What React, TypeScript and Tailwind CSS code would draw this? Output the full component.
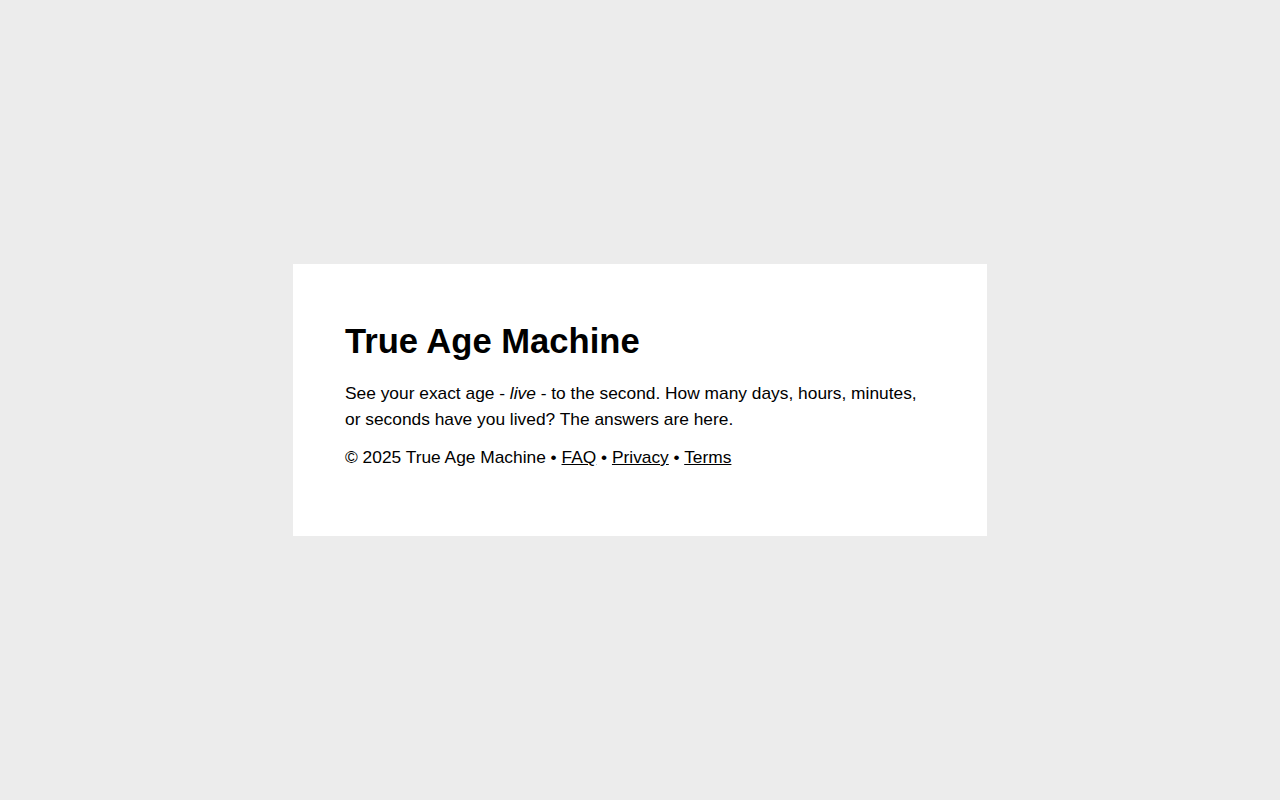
export default function App() {
  return (
    <div className="min-h-screen bg-[#ececec] flex items-center justify-center" style={{ fontFamily: '"Liberation Sans", Arial, sans-serif' }}>
      <div className="w-[694px] bg-white px-[52px] pt-[56px] pb-[66px] text-black">
        <h1 className="text-[34.6px] font-bold leading-[42px] mb-[18px]">True Age Machine</h1>
        <p className="text-[17.35px] leading-[26px] mb-[12px]">
          See your exact age - <em>live</em> - to the second. How many days, hours, minutes, or seconds have you lived? The answers are here.
        </p>
        <p className="text-[17.35px] leading-[26px]">
          © 2025 True Age Machine • <a href="#" className="underline">FAQ</a> • <a href="#" className="underline">Privacy</a> • <a href="#" className="underline">Terms</a>
        </p>
      </div>
    </div>
  );
}
